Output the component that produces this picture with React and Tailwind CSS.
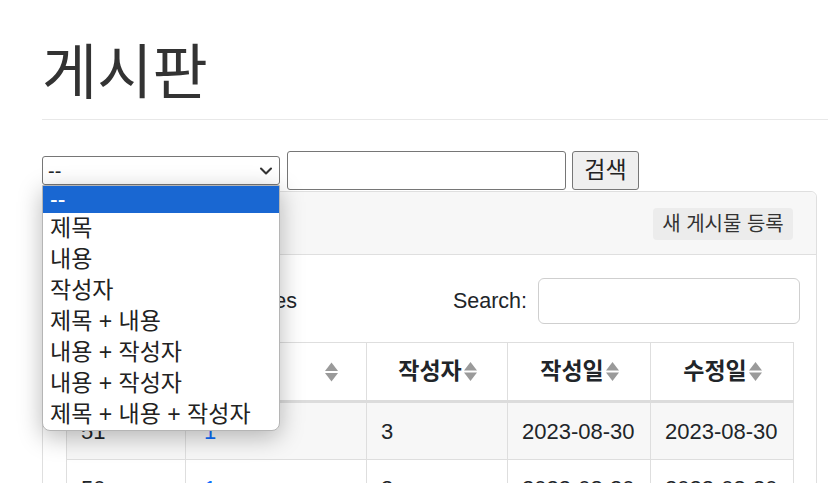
import { ChevronDown } from "lucide-react"

const font = { fontFamily: '"Liberation Sans", "Noto Sans CJK KR", sans-serif' }

function SortIcon() {
  return (
    <svg width="15" height="21" viewBox="0 0 15 21" className="shrink-0">
      <path d="M7.5 1 L14 9.5 L1 9.5 Z" fill="#9a9a9a" />
      <path d="M1 11.5 L14 11.5 L7.5 20 Z" fill="#9a9a9a" />
    </svg>
  )
}

const options = ["제목", "내용", "작성자", "제목 + 내용", "내용 + 작성자", "내용 + 작성자", "제목 + 내용 + 작성자"]

const rows = [
  { no: "51", title: "1", writer: "3", created: "2023-08-30", updated: "2023-08-30" },
  { no: "50", title: "1", writer: "3", created: "2023-08-30", updated: "2023-08-30" },
  { no: "49", title: "1", writer: "3", created: "2023-08-30", updated: "2023-08-30" },
]

export default function App() {
  return (
    <div className="relative h-[483px] overflow-hidden bg-white text-[#212529]" style={font}>
      <div className="pl-[42px]">
        <div className="mt-[41px] h-[66px] flex items-center">
          <h1 className="text-[60px] leading-none text-[#333]">게시판</h1>
        </div>
        <div className="mt-[12px] border-t border-[#e8e8e8]" />

        <div className="mt-[31px] h-[39px] flex items-center">
          <div className="w-[238px] h-[29px] border border-[#767676] rounded-[3px] flex items-center justify-between pl-[5px] pr-[3px] text-[20px] leading-none">
            <span>--</span>
            <ChevronDown size={20} strokeWidth={2.5} className="text-[#333]" />
          </div>
          <div className="ml-[7px] w-[279px] h-[39px] border border-[#767676] rounded-[3px]" />
          <button className="ml-[6px] w-[67px] h-[39px] border border-[#767676] rounded-[3px] bg-[#efefef] text-[23px] leading-none text-[#222]">
            검색
          </button>
        </div>

        <div className="mt-[1px] w-[775px] border border-[#dfdfdf] rounded-[6px]">
          <div className="h-[63px] bg-[#f7f7f7] border-b border-[#dfdfdf] rounded-t-[6px] flex items-center justify-end pr-[23px]">
            <button className="mt-[1px] w-[140px] h-[32px] bg-[#ececec] rounded-[4px] text-[20px] leading-none text-[#333]">
              새 게시물 등록
            </button>
          </div>
          <div className="px-[23px] pt-[23px]">
            <div className="w-[734px] h-[46px] flex items-center justify-between text-[21.5px]">
              <div className="w-[231px] flex items-center justify-end gap-[6px]">
                <span>Show</span>
                <div className="w-[70px] h-[40px] border border-[#ccc] rounded-[6px]" />
                <span>entries</span>
              </div>
              <div className="flex items-center">
                <span>Search:</span>
                <div className="ml-[11px] w-[262px] h-[46px] border border-[#cfcfcf] rounded-[6px]" />
              </div>
            </div>

            <table className="mt-[18px] w-[727px] table-fixed border-collapse text-[22px]">
              <colgroup>
                <col className="w-[119px]" />
                <col className="w-[181px]" />
                <col className="w-[141px]" />
                <col className="w-[143px]" />
                <col className="w-[143px]" />
              </colgroup>
              <thead>
                <tr className="h-[59px]">
                  {["번호", "제목", "작성자", "작성일", "수정일"].map((h, i) => (
                    <th key={h} className="relative border border-[#dedede] border-b-[3px] border-b-[#dcdcdc] px-[10px] font-bold text-[23px]">
                      {i < 2 ? (
                        <span className="block text-left">{h}</span>
                      ) : (
                        <span className="flex items-center justify-center gap-[1px] pl-[2px]">
                          {h}
                          <SortIcon />
                        </span>
                      )}
                      {i < 2 && (
                        <span className="absolute right-[27px] top-1/2 -translate-y-1/2">
                          <SortIcon />
                        </span>
                      )}
                    </th>
                  ))}
                </tr>
              </thead>
              <tbody>
                {rows.map((r, i) => (
                  <tr key={i} className={`h-[58px] ${i % 2 === 0 ? "bg-[#f7f7f7]" : "bg-white"}`}>
                    <td className="border border-[#dedede] px-[14px]">{r.no}</td>
                    <td className="border border-[#dedede] px-[18px] text-[#0d6efd]">{r.title}</td>
                    <td className="border border-[#dedede] px-[14px]">{r.writer}</td>
                    <td className="border border-[#dedede] px-[14px]">{r.created}</td>
                    <td className="border border-[#dedede] px-[14px]">{r.updated}</td>
                  </tr>
                ))}
              </tbody>
            </table>
          </div>
        </div>
      </div>

      <div className="absolute left-[42px] top-[185px] w-[238px] border border-[#b5b5b5] rounded-b-[8px] bg-white overflow-hidden shadow-[0_6px_24px_rgba(0,0,0,0.28)] text-[23px] text-[#222]">
        <div className="h-[27px] bg-[#1967d2] text-white flex items-center pl-[7px] leading-none">--</div>
        {options.map((o, i) => (
          <div key={i} className="h-[31px] flex items-center pl-[7px] leading-none">
            {o}
          </div>
        ))}
      </div>
    </div>
  )
}
